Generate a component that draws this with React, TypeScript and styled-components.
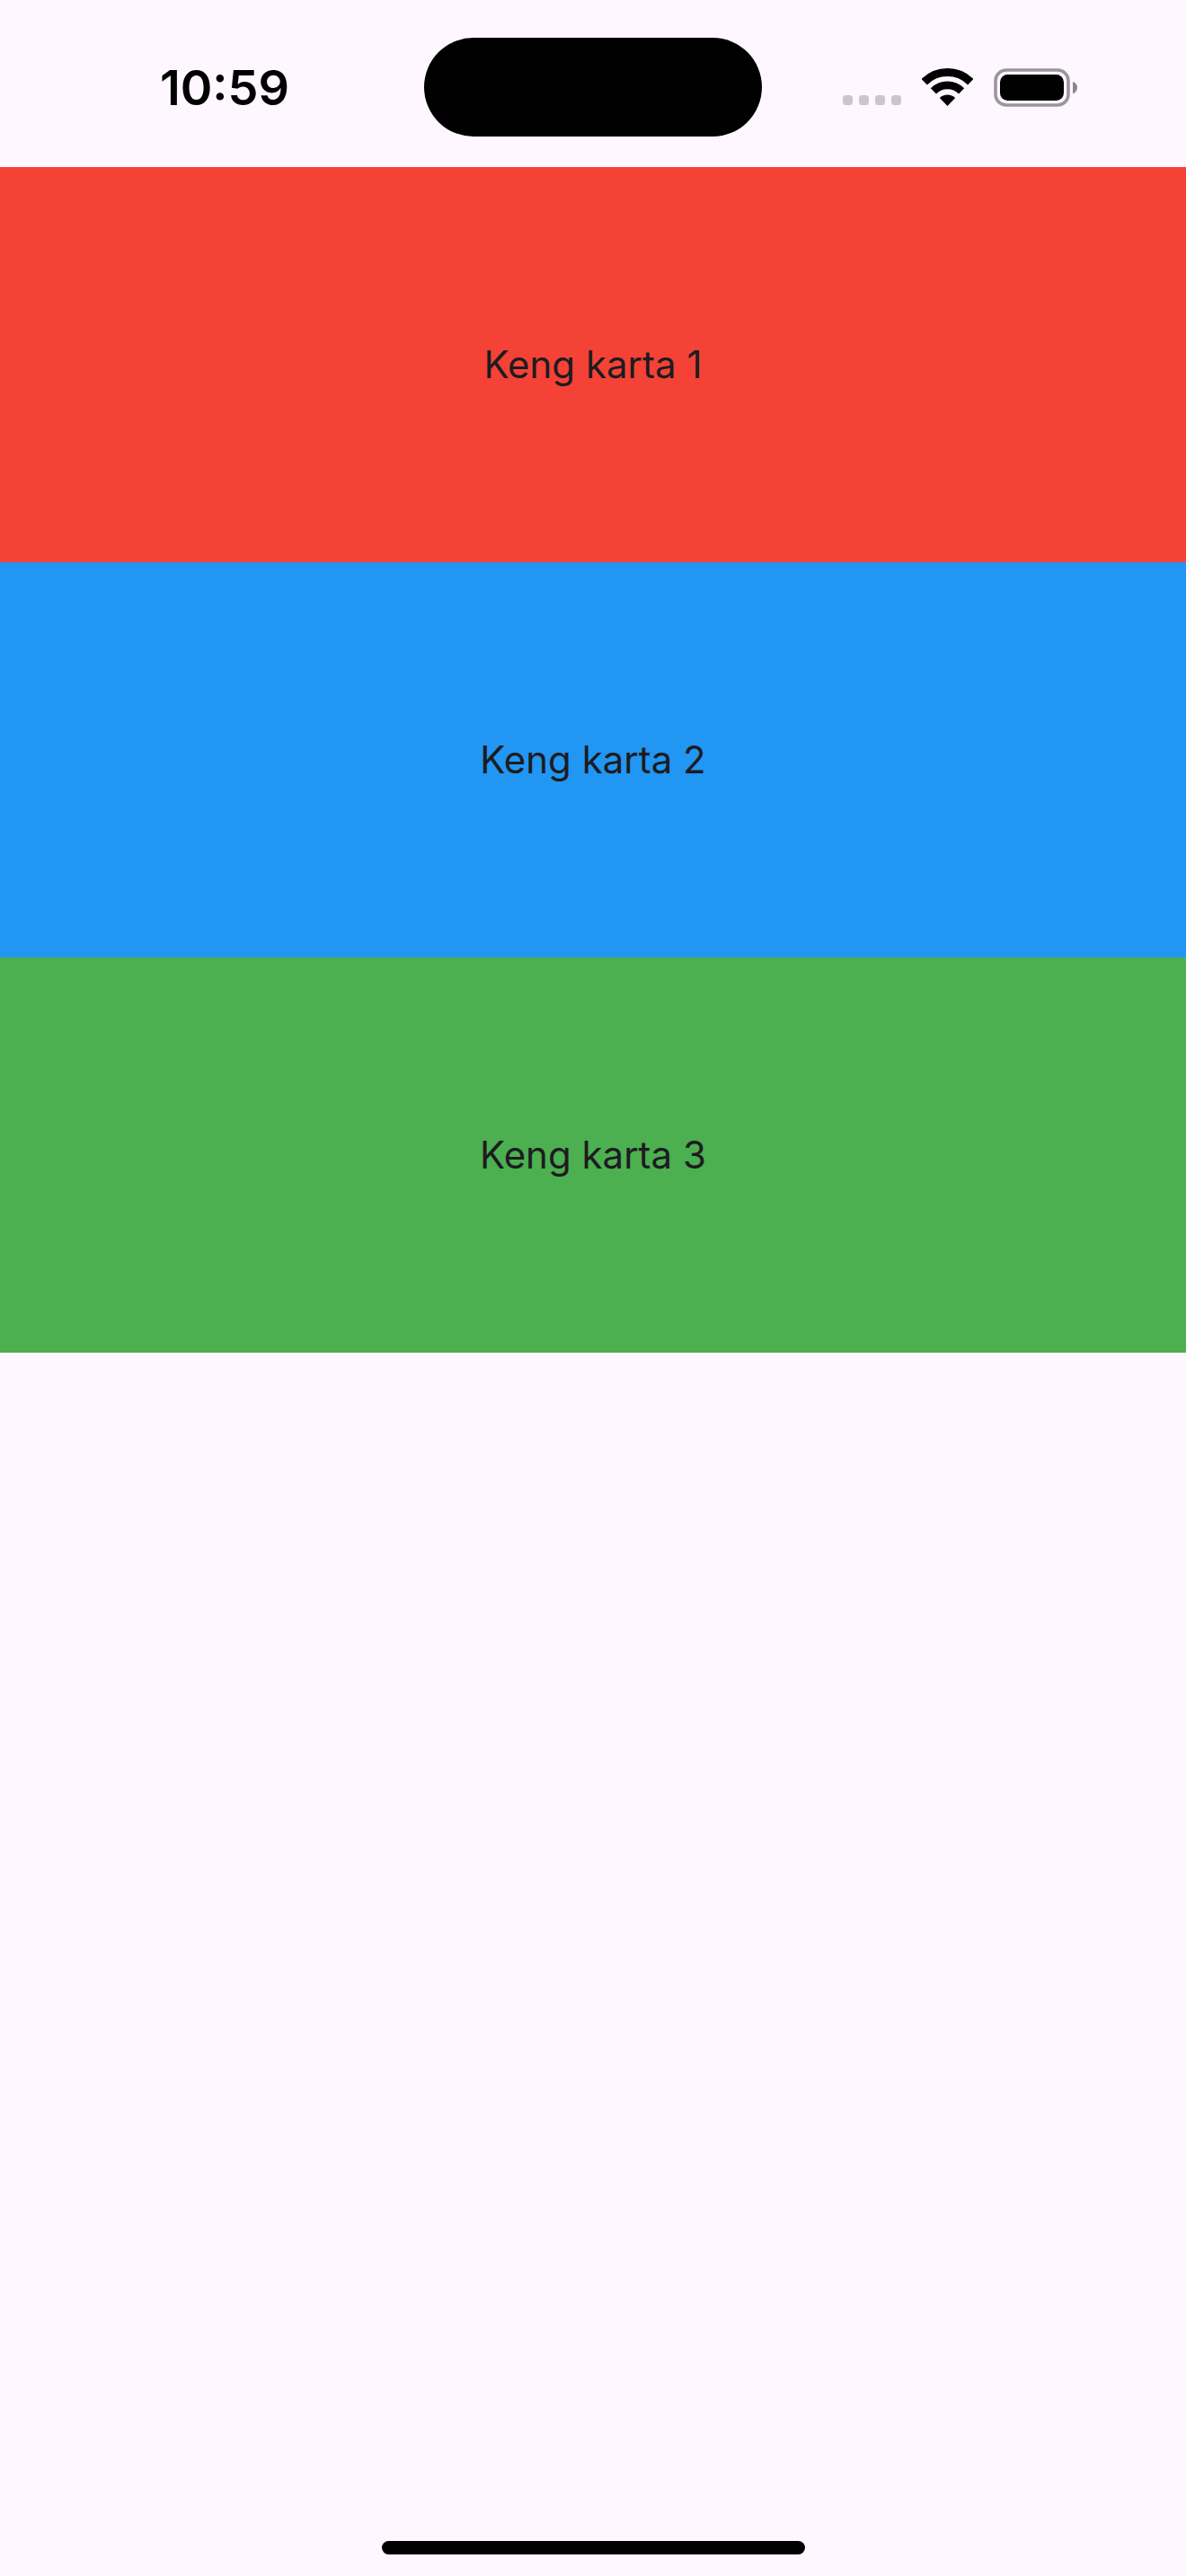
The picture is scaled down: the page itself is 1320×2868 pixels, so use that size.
import React from "react";
import styled, { createGlobalStyle } from "styled-components";

const GlobalStyle = createGlobalStyle`
  *, *::before, *::after {
    box-sizing: border-box;
  }

  body {
    margin: 0;
    background: #fef7ff;
    font-family: Inter, "Liberation Sans", sans-serif;
  }
`;

const Screen = styled.div`
  display: flex;
  flex-direction: column;
  min-height: 100vh;
`;

const StatusBar = styled.header`
  display: grid;
  grid-template-columns: 1fr 376px 1fr;
  align-items: center;
  height: 186px;
  padding-top: 8px;
  color: #000;
`;

const Clock = styled.time`
  padding: 2px 0 0 28px;
  font-size: 54px;
  font-weight: 600;
  line-height: 64px;
  text-align: center;
`;

const Island = styled.div`
  height: 110px;
  border-radius: 55px;
  background: #000;
`;

const Indicators = styled.div`
  display: flex;
  align-items: flex-end;
  justify-content: center;
  gap: 23px;
  padding-right: 32px;
`;

const Icon = styled.svg`
  display: block;
  flex: none;
`;

const CardList = styled.main`
  display: flex;
  flex: 1;
  flex-direction: column;
`;

const Card = styled.section<{ $color: string }>`
  display: flex;
  align-items: center;
  justify-content: center;
  height: 440px;
  background: ${({ $color }) => $color};
`;

const CardLabel = styled.p`
  margin: 0;
  color: #1d1b20;
  font-size: 42px;
  font-weight: 400;
  line-height: 60px;
`;

const HomeArea = styled.footer`
  display: flex;
  justify-content: center;
  padding-bottom: 24px;
`;

const HomeIndicator = styled.div`
  width: 471px;
  height: 15px;
  border-radius: 8px;
  background: #000;
`;

const cards = [
  { label: "Keng karta 1", color: "#f44336" },
  { label: "Keng karta 2", color: "#2196f3" },
  { label: "Keng karta 3", color: "#4caf50" },
];

function SignalIcon() {
  return (
    <Icon width="65" height="13" viewBox="0 0 65 13" fill="#cbc5cc" aria-hidden="true">
      {[0, 18, 36, 54].map((x) => (
        <rect key={x} x={x} width="11" height="11" rx="3.5" />
      ))}
    </Icon>
  );
}

function WifiIcon() {
  return (
    <Icon width="57" height="43" viewBox="0 0 57 43" aria-hidden="true">
      <g fill="none" stroke="#000">
        <path d="M2.7 15.2A36.5 36.5 0 0 1 54.3 15.2" strokeWidth="9" />
        <path d="M12.9 25.4A22 22 0 0 1 44.1 25.4" strokeWidth="8.6" />
      </g>
      <path d="M28.5 42L19.8 33A12.3 12.3 0 0 1 37.2 33Z" />
    </Icon>
  );
}

function BatteryIcon() {
  return (
    <Icon width="93" height="43" viewBox="0 0 93 43" aria-hidden="true">
      <rect x="2" y="2" width="81" height="39" rx="12" fill="none" stroke="#9b969c" strokeWidth="3.6" />
      <rect x="7" y="7" width="71" height="29" rx="8.5" />
      <path d="M88 15C91.3 16 93 18.5 93 21.5S91.3 27 88 28.5Z" fill="#8b868b" />
    </Icon>
  );
}

export default function App() {
  return (
    <>
      <GlobalStyle />
      <Screen>
        <StatusBar>
          <Clock dateTime="10:59">10:59</Clock>
          <Island />
          <Indicators>
            <SignalIcon />
            <WifiIcon />
            <BatteryIcon />
          </Indicators>
        </StatusBar>
        <CardList>
          {cards.map(({ label, color }) => (
            <Card key={label} $color={color}>
              <CardLabel>{label}</CardLabel>
            </Card>
          ))}
        </CardList>
        <HomeArea>
          <HomeIndicator />
        </HomeArea>
      </Screen>
    </>
  );
}
